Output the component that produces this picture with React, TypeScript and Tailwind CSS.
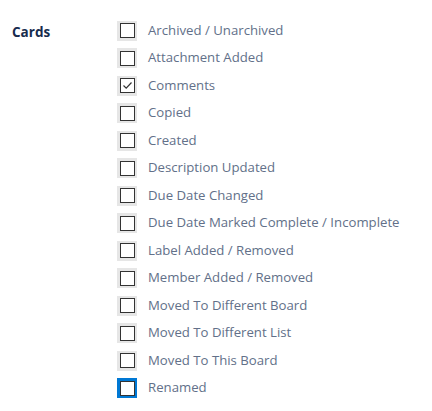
import React from 'react';

const items = [
  { label: 'Archived / Unarchived' },
  { label: 'Attachment Added' },
  { label: 'Comments', checked: true },
  { label: 'Copied' },
  { label: 'Created' },
  { label: 'Description Updated' },
  { label: 'Due Date Changed' },
  { label: 'Due Date Marked Complete / Incomplete' },
  { label: 'Label Added / Removed' },
  { label: 'Member Added / Removed' },
  { label: 'Moved To Different Board' },
  { label: 'Moved To Different List' },
  { label: 'Moved To This Board' },
  { label: 'Renamed', focused: true },
];

const Box: React.FC<{ checked?: boolean; focused?: boolean }> = ({ checked, focused }) => (
  <span
    className={`flex items-center justify-center w-[20px] h-[20px] ${
      focused ? 'bg-[#0078d4]' : 'bg-[#e6e6e6]'
    }`}
  >
    <span className="flex items-center justify-center w-[15px] h-[15px] bg-white border-[1.5px] border-[#333333]">
      {checked && (
        <svg width="11" height="11" viewBox="0 0 11 11" fill="none">
          <path d="M1.5 5.5 L4.2 8.2 L9.5 2.5" stroke="#333" strokeWidth="1.2" />
        </svg>
      )}
    </span>
  </span>
);

export default function App() {
  return (
    <div className="flex bg-white pt-[17px] pl-[12px] font-['Open_Sans',sans-serif]">
      <div className="w-[105px] h-[27.5px] pt-[3px] flex items-center text-[13.5px] font-bold text-[#172b4d]">
        Cards
      </div>
      <div className="flex flex-col">
        {items.map((it) => (
          <label key={it.label} className="flex items-center h-[27.5px]">
            <Box checked={it.checked} focused={it.focused} />
            <span className="ml-[11px] text-[13.2px] text-[#627089]">{it.label}</span>
          </label>
        ))}
      </div>
    </div>
  );
}
